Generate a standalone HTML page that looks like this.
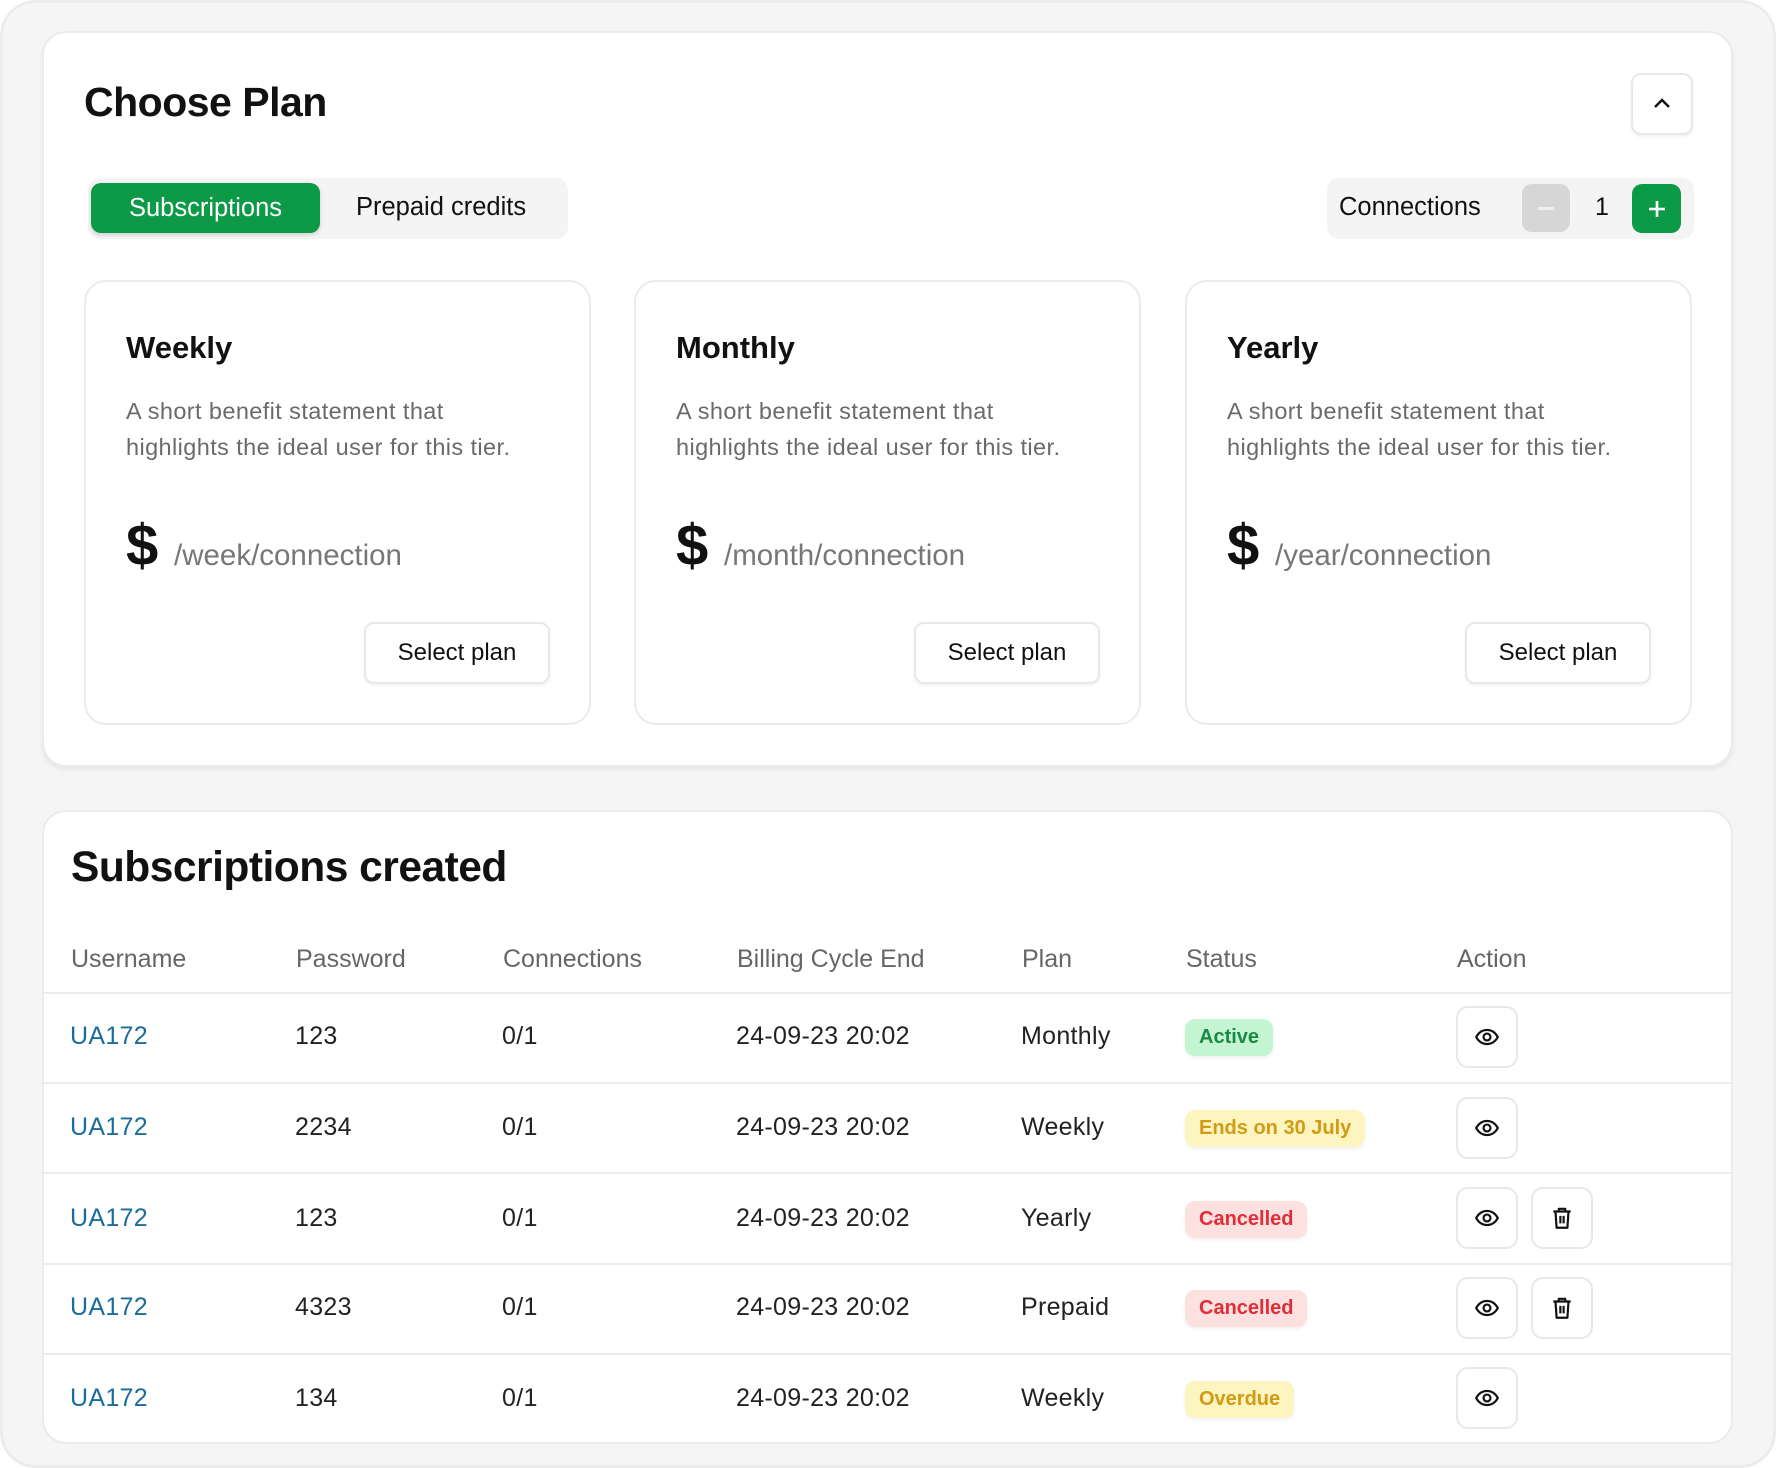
<!DOCTYPE html>
<html><head><meta charset="utf-8"><style>
*{box-sizing:border-box;margin:0;padding:0}
body{width:1776px;height:1468px;background:#fff;font-family:"Liberation Sans",Arial,sans-serif;color:#111;position:relative;overflow:hidden}
.frame{position:absolute;left:0;top:0;width:1776px;height:1468px;background:#f5f5f5;border:3px solid #ececec;border-radius:36px}
.card{position:absolute;left:42px;width:1691px;background:#fff;border:2px solid #ebebeb;border-radius:24px}
.abs{position:absolute}
.t{position:absolute;white-space:nowrap}
.plan{position:absolute;top:280px;width:507px;height:445px;border:2px solid #ebebeb;border-radius:22px;background:#fff}
.btn{position:absolute;border:2px solid #e8e8e8;border-radius:10px;background:#fff;box-shadow:0 2px 3px rgba(0,0,0,.05)}
.sel{left:278px;top:340px;width:186px;height:62px;font-size:24px;display:flex;align-items:center;justify-content:center;color:#111}
.hd{font-size:25px;color:#666}
.cell{font-size:25px;color:#222;letter-spacing:.3px}
.line{position:absolute;left:0;width:1689px;height:2px;background:#ececec}
.badge{position:absolute;height:37px;border-radius:10px;font-size:20px;font-weight:bold;padding:0 14px;line-height:37px;box-shadow:0 2px 3px rgba(0,0,0,.06)}
.ib{position:absolute;width:62px;height:62px;border:2px solid #e8e8e8;border-radius:12px;display:flex;align-items:center;justify-content:center;background:#fff}
.desc{left:40px;top:111px;font-size:23.5px;color:#6a6a6a;line-height:36px;letter-spacing:.4px}
.ttl{left:40px;top:48px;font-size:31px;font-weight:bold}
.dol{left:40px;top:230px;font-size:58px;font-weight:bold}
.per{left:88px;top:257px;font-size:29.5px;color:#777}
</style></head><body>
<div class="frame"></div>

<div class="card" style="top:31px;height:736px;box-shadow:0 3px 5px rgba(0,0,0,.06)">
  <div class="t" style="left:40px;top:46px;font-size:41px;font-weight:bold;letter-spacing:-.5px">Choose Plan</div>
  <div class="btn" style="left:1587px;top:40px;width:62px;height:62px;display:flex;align-items:center;justify-content:center">
    <svg width="20" height="14" viewBox="0 0 20 14"><path d="M3 10 L10 3 L17 10" fill="none" stroke="#111" stroke-width="2.4"/></svg>
  </div>
  <div class="abs" style="left:44px;top:145px;width:480px;height:61px;background:#f4f4f4;border-radius:12px"></div>
  <div class="abs" style="left:47px;top:150px;width:229px;height:50px;background:#0c9a47;border-radius:10px;box-shadow:0 2px 4px rgba(0,0,0,.15);color:#fff;font-size:25.5px;display:flex;align-items:center;justify-content:center">Subscriptions</div>
  <div class="t" style="left:312px;top:160px;font-size:25.5px">Prepaid credits</div>

  <div class="abs" style="left:1283px;top:145px;width:367px;height:61px;background:#f4f4f4;border-radius:12px"></div>
  <div class="t" style="left:1295px;top:160px;font-size:25.5px">Connections</div>
  <div class="abs" style="left:1478px;top:151px;width:48px;height:48px;background:#d6d6d6;border-radius:10px;display:flex;align-items:center;justify-content:center"><div style="width:16px;height:3px;background:#eee"></div></div>
  <div class="t" style="left:1551px;top:160px;font-size:25px">1</div>
  <div class="abs" style="left:1588px;top:151px;width:49px;height:49px;background:#0c9a47;border-radius:10px;display:flex;align-items:center;justify-content:center">
    <svg width="22" height="22" viewBox="0 0 22 22"><path d="M11 3V19M3 11H19" stroke="#fff" stroke-width="2.6"/></svg>
  </div>

  <div class="plan" style="left:40px;top:247px">
    <div class="t ttl">Weekly</div>
    <div class="t desc">A short benefit statement that<br>highlights the ideal user for this tier.</div>
    <div class="t dol">$</div>
    <div class="t per">/week/connection</div>
    <div class="btn sel">Select plan</div>
  </div>
  <div class="plan" style="left:590px;top:247px">
    <div class="t ttl">Monthly</div>
    <div class="t desc">A short benefit statement that<br>highlights the ideal user for this tier.</div>
    <div class="t dol">$</div>
    <div class="t per">/month/connection</div>
    <div class="btn sel">Select plan</div>
  </div>
  <div class="plan" style="left:1141px;top:247px">
    <div class="t ttl">Yearly</div>
    <div class="t desc">A short benefit statement that<br>highlights the ideal user for this tier.</div>
    <div class="t dol">$</div>
    <div class="t per">/year/connection</div>
    <div class="btn sel">Select plan</div>
  </div>
</div>

<div class="card" style="top:810px;height:634px">
  <div class="t" style="left:27px;top:32px;font-size:42.5px;font-weight:bold;letter-spacing:-.5px">Subscriptions created</div>
  <div class="t hd" style="left:27px;top:133px">Username</div>
  <div class="t hd" style="left:252px;top:133px">Password</div>
  <div class="t hd" style="left:459px;top:133px">Connections</div>
  <div class="t hd" style="left:693px;top:133px">Billing Cycle End</div>
  <div class="t hd" style="left:978px;top:133px">Plan</div>
  <div class="t hd" style="left:1142px;top:133px">Status</div>
  <div class="t hd" style="left:1413px;top:133px">Action</div>
  <div class="line" style="top:180px"></div>
  <div class="line" style="top:270px"></div>
  <div class="line" style="top:360px"></div>
  <div class="line" style="top:451px"></div>
  <div class="line" style="top:541px"></div>
</div>

<svg width="0" height="0" style="position:absolute"><defs>
<symbol id="eye" viewBox="0 0 24 24"><path d="M2 12C4.5 7.5 8 5.5 12 5.5S19.5 7.5 22 12C19.5 16.5 16 18.5 12 18.5S4.5 16.5 2 12Z" fill="none" stroke="#111" stroke-width="2"/><circle cx="12" cy="12" r="3.2" fill="none" stroke="#111" stroke-width="2"/></symbol>
<symbol id="trash" viewBox="0 0 24 24"><path d="M4 6H20M9 6V3.5H15V6M6 6L7 21H17L18 6M10.5 10V17M13.5 10V17" fill="none" stroke="#111" stroke-width="2" stroke-linejoin="round"/></symbol>
</defs></svg>

<!-- Row 1 -->
<div class="t cell" style="left:70px;top:1022px;color:#1a6c9c">UA172</div>
<div class="t cell" style="left:295px;top:1022px">123</div>
<div class="t cell" style="left:502px;top:1022px">0/1</div>
<div class="t cell" style="left:736px;top:1022px">24-09-23 20:02</div>
<div class="t cell" style="left:1021px;top:1022px">Monthly</div>
<div class="badge" style="left:1185px;top:1019px;background:#c3f5d3;color:#1a8a43">Active</div>
<div class="ib" style="left:1456px;top:1006px"><svg width="26" height="26"><use href="#eye"/></svg></div>
<!-- Row 2 -->
<div class="t cell" style="left:70px;top:1113px;color:#1a6c9c">UA172</div>
<div class="t cell" style="left:295px;top:1113px">2234</div>
<div class="t cell" style="left:502px;top:1113px">0/1</div>
<div class="t cell" style="left:736px;top:1113px">24-09-23 20:02</div>
<div class="t cell" style="left:1021px;top:1113px">Weekly</div>
<div class="badge" style="left:1185px;top:1110px;background:#fdf5bf;color:#d39a14">Ends on 30 July</div>
<div class="ib" style="left:1456px;top:1097px"><svg width="26" height="26"><use href="#eye"/></svg></div>
<!-- Row 3 -->
<div class="t cell" style="left:70px;top:1204px;color:#1a6c9c">UA172</div>
<div class="t cell" style="left:295px;top:1204px">123</div>
<div class="t cell" style="left:502px;top:1204px">0/1</div>
<div class="t cell" style="left:736px;top:1204px">24-09-23 20:02</div>
<div class="t cell" style="left:1021px;top:1204px">Yearly</div>
<div class="badge" style="left:1185px;top:1201px;background:#fde1e1;color:#e12d36">Cancelled</div>
<div class="ib" style="left:1456px;top:1187px"><svg width="26" height="26"><use href="#eye"/></svg></div>
<div class="ib" style="left:1531px;top:1187px"><svg width="26" height="26"><use href="#trash"/></svg></div>
<!-- Row 4 -->
<div class="t cell" style="left:70px;top:1293px;color:#1a6c9c">UA172</div>
<div class="t cell" style="left:295px;top:1293px">4323</div>
<div class="t cell" style="left:502px;top:1293px">0/1</div>
<div class="t cell" style="left:736px;top:1293px">24-09-23 20:02</div>
<div class="t cell" style="left:1021px;top:1293px">Prepaid</div>
<div class="badge" style="left:1185px;top:1290px;background:#fde1e1;color:#e12d36">Cancelled</div>
<div class="ib" style="left:1456px;top:1277px"><svg width="26" height="26"><use href="#eye"/></svg></div>
<div class="ib" style="left:1531px;top:1277px"><svg width="26" height="26"><use href="#trash"/></svg></div>
<!-- Row 5 -->
<div class="t cell" style="left:70px;top:1384px;color:#1a6c9c">UA172</div>
<div class="t cell" style="left:295px;top:1384px">134</div>
<div class="t cell" style="left:502px;top:1384px">0/1</div>
<div class="t cell" style="left:736px;top:1384px">24-09-23 20:02</div>
<div class="t cell" style="left:1021px;top:1384px">Weekly</div>
<div class="badge" style="left:1185px;top:1381px;background:#fdf5bf;color:#d39a14">Overdue</div>
<div class="ib" style="left:1456px;top:1367px"><svg width="26" height="26"><use href="#eye"/></svg></div>
</body></html>
